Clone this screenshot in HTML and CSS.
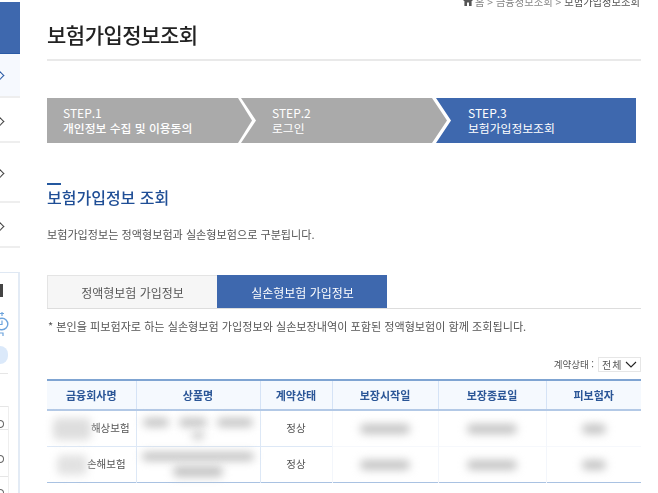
FILE: index.html
```html
<!DOCTYPE html>
<html lang="ko">

<head>
  <meta charset="UTF-8">
  <meta name="viewport" content="width=device-width, initial-scale=1.0">
  <title>보험가입정보조회</title>
  <link rel="stylesheet" href="styles.css">
</head>

<body>
  <aside class="sidebar">
    <div class="side-head"></div>
    <div class="side-item side-item-on"><span class="chevron"></span></div>
    <div class="side-item"><span class="chevron"></span></div>
    <div class="side-item side-item-tall"><span class="chevron"></span></div>
    <div class="side-item"><span class="chevron"></span></div>

    <div class="side-box">
      <div class="side-box-title"></div>
      <svg class="side-icon" width="10" height="24" viewBox="0 0 10 24">
        <path d="M2 0v4M0 1.500h4M0 21h3v3" fill="none" stroke="#6ea4dc" stroke-width="1.200"/>
        <circle cx="2" cy="12" r="5.800" fill="none" stroke="#6ea4dc" stroke-width="1.400"/>
        <path d="M2 8.500v4h-3" fill="none" stroke="#6ea4dc" stroke-width="1.200"/>
      </svg>
      <div class="side-pill"></div>
      <div class="side-line"></div>
      <div class="side-rows">
        <div class="side-row side-row-a"><span class="dot"></span></div>
        <div class="side-row side-row-b"><span class="dot"></span></div>
        <div class="side-row side-row-c"><span class="dot"></span></div>
      </div>
    </div>
  </aside>

  <main class="content">
    <div class="crumb">
      <svg width="10" height="10" viewBox="0 0 10 10">
        <path d="M5 0 10 5H8.600V10H6V6.500H4V10H1.400V5H0Z" fill="#555"/>
      </svg>
      <span>홈 &gt; 금융정보조회 &gt; <b>보험가입정보조회</b></span>
    </div>

    <h1 class="page-title">보험가입정보조회</h1>

    <ol class="steps">
      <li class="step step-first">
        <span>STEP.1</span>
        <strong>개인정보 수집 및 이용동의</strong>
      </li>
      <li class="step step-mid">
        <span>STEP.2</span>
        로그인
      </li>
      <li class="step step-last">
        <span>STEP.3</span>
        보험가입정보조회
      </li>
    </ol>

    <h2 class="section-title">보험가입정보 조회</h2>
    <p class="lead">보험가입정보는 정액형보험과 실손형보험으로 구분됩니다.</p>

    <div class="tabs">
      <a class="tab">정액형보험 가입정보</a>
      <a class="tab tab-on">실손형보험 가입정보</a>
    </div>
    <p class="note">* 본인을 피보험자로 하는 실손형보험 가입정보와 실손보장내역이 포함된 정액형보험이 함께 조회됩니다.</p>

    <div class="filter">
      <span>계약상태 :</span>
      <div class="fake-select">
        전체
        <svg width="12" height="7" viewBox="0 0 12 7"><path d="M1 1l5 5 5-5" fill="none" stroke="#222" stroke-width="1.100"/></svg>
      </div>
    </div>

    <table class="result">
      <colgroup>
        <col class="c1"><col class="c2"><col class="c3"><col class="c4"><col class="c5"><col class="c6">
      </colgroup>
      <thead>
        <tr>
          <th>금융회사명</th>
          <th>상품명</th>
          <th>계약상태</th>
          <th>보장시작일</th>
          <th>보장종료일</th>
          <th>피보험자</th>
        </tr>
      </thead>
      <tbody>
        <tr>
          <td class="company"><div class="cell-row"><i class="smudge s-name"></i>해상보험</div></td>
          <td>
            <div class="cell-stack">
              <div class="cell-row"><i class="smudge s-p1"></i><i class="smudge s-p2"></i><i class="smudge s-p3"></i></div>
              <i class="smudge s-p4"></i>
            </div>
          </td>
          <td>정상</td>
          <td class="hidden-cell"><i class="smudge s-date"></i></td>
          <td class="hidden-cell"><i class="smudge s-date"></i></td>
          <td class="hidden-cell"><i class="smudge s-person"></i></td>
        </tr>
        <tr>
          <td class="company"><div class="cell-row"><i class="smudge s-name2"></i>손해보험</div></td>
          <td>
            <div class="cell-stack">
              <i class="smudge s-p5"></i>
              <i class="smudge s-p6"></i>
            </div>
          </td>
          <td>정상</td>
          <td class="hidden-cell"><i class="smudge s-date"></i></td>
          <td class="hidden-cell"><i class="smudge s-date"></i></td>
          <td class="hidden-cell"><i class="smudge s-person"></i></td>
        </tr>
      </tbody>
    </table>
  </main>
</body>

</html>
```

FILE: styles.css
```css
html, body {
  height: 100%;
}

body {
  margin: 0;
  display: flex;
  overflow: hidden;
  background-color: #ffffff;
  color: #555555;
  font-family: "Noto Sans CJK KR", "Noto Sans", sans-serif;
  font-size: 11px;
}

/* the screenshot is a scaled capture, so everything is a bit soft */
.sidebar,
.content {
  filter: blur(0.35px);
}

/* left menu, cut off by the window */
.sidebar {
  width: 20px;
  flex-shrink: 0;
  margin-right: 27px;
  overflow: hidden;
}

.side-head {
  height: 51px;
  margin-top: 2px;
  background-color: #3e68ae;
  border-bottom: 1px solid #2a5aa5;
}

.side-item {
  box-sizing: border-box;
  height: 45px;
  display: flex;
  align-items: center;
  border-bottom: 2px solid #eeeeee;
}

.side-item-on {
  height: 44px;
  background-color: #f6f9fe;
}

.side-item-tall {
  height: 60px;
}

.chevron {
  width: 6px;
  height: 6px;
  margin: 3px 0 0 -4px;
  border-top: 1.500px solid #444444;
  border-right: 1.500px solid #444444;
  transform: rotate(45deg);
}

.side-item-on .chevron {
  margin-top: 0;
  border-color: #2a5aa5;
}

.side-box {
  box-sizing: border-box;
  height: 230px;
  margin-top: 24px;
  padding-top: 11px;
  border-top: 1px solid #dfe8f3;
  border-right: 2px solid #e3ebf5;
}

.side-box-title {
  width: 3px;
  height: 13px;
  background-color: #444444;
}

.side-icon {
  display: block;
  margin-top: 15px;
}

.side-pill {
  width: 8px;
  height: 18px;
  margin-top: 10px;
  background-color: #dbe9fa;
  border-radius: 0 9px 9px 0;
}

.side-line {
  width: 8px;
  height: 1px;
  margin-top: 9px;
  background-color: #e6e6e6;
}

.side-rows {
  width: 8px;
  margin-top: 32px;
  border-right: 1px solid #eeeeee;
}

.side-row {
  box-sizing: border-box;
  display: flex;
  border-top: 1px solid #e6e6e6;
}

.side-row-a { height: 23px; padding-top: 13px; }
.side-row-b { height: 47px; padding-top: 25px; }
.side-row-c { height: 30px; padding-top: 12px; }

.dot {
  width: 3px;
  height: 6px;
  border: 1px solid #666666;
  border-left: 0;
  border-radius: 0 4px 4px 0;
}

/* main column */
.content {
  width: 594px;
  flex-shrink: 0;
}

.crumb {
  display: flex;
  justify-content: flex-end;
  align-items: center;
  gap: 2px;
  height: 12px;
  margin-top: -5px;
  padding-right: 1px;
  font-size: 10.300px;
  color: #888888;
}

.crumb b {
  font-weight: normal;
  color: #555555;
}

.page-title {
  margin: 13px 0 0;
  height: 41px;
  line-height: 29px;
  font-size: 21px;
  font-weight: 500;
  color: #222222;
  letter-spacing: -0.500px;
  border-bottom: 2px solid #e9e9e9;
  box-sizing: border-box;
}

.steps {
  display: flex;
  list-style: none;
  margin: 37px 0 0;
  padding: 0;
  height: 45px;
}

.step {
  box-sizing: border-box;
  height: 45px;
  padding-top: 7px;
  line-height: 15px;
  font-size: 11.800px;
  color: #ffffff;
  background-color: #aaaaaa;
}

.step span {
  display: block;
  font-size: 12px;
}

.step strong {
  font-weight: 500;
}

.step-first {
  width: 205px;
  padding-left: 16px;
  clip-path: polygon(0 0, 191px 0, 100% 50%, 191px 100%, 0 100%);
}

.step-mid {
  width: 206px;
  margin-left: -11px;
  padding-left: 31px;
  clip-path: polygon(0 0, 191px 0, 100% 50%, 191px 100%, 0 100%, 15px 50%);
}

.step-last {
  width: 200px;
  margin-left: -11px;
  padding-left: 32px;
  background-color: #3e68ae;
  clip-path: polygon(0 0, 100% 0, 100% 100%, 0 100%, 15px 50%);
}

.section-title {
  position: relative;
  margin: 43px 0 0;
  line-height: 22px;
  font-size: 16px;
  font-weight: 500;
  color: #1f4e96;
}

.section-title::before {
  content: "";
  position: absolute;
  left: 0;
  top: -3px;
  width: 14px;
  height: 2px;
  background-color: #24589f;
}

.lead {
  margin: 17px 0 0;
  line-height: 18px;
  font-size: 11.100px;
}

.tabs {
  display: flex;
  margin-top: 32px;
  border-bottom: 1px solid #dddddd;
}

.tab {
  box-sizing: border-box;
  width: 170px;
  height: 33px;
  line-height: 33px;
  text-align: center;
  font-size: 12px;
  background-color: #f6f6f6;
  border: 1px solid #e4e4e4;
  border-bottom: 0;
  border-right: 0;
}

.tab-on {
  background-color: #3e68ae;
  border-color: #3e68ae;
  color: #ffffff;
}

.note {
  margin: 8px 0 0 1px;
  line-height: 18px;
  font-size: 11.100px;
}

.filter {
  display: flex;
  justify-content: flex-end;
  align-items: center;
  gap: 4px;
  margin-top: 21px;
  height: 16px;
  font-size: 9.500px;
}

.fake-select {
  box-sizing: border-box;
  display: flex;
  align-items: center;
  justify-content: space-between;
  width: 43px;
  height: 15px;
  padding: 0 3px 0 3px;
  font-size: 10px;
  letter-spacing: 1px;
  border: 1px solid #e6e6e6;
}

.result {
  width: 594px;
  margin-top: 7px;
  border-collapse: collapse;
  table-layout: fixed;
  border-top: 2px solid #7fa4d2;
  border-bottom: 1px solid #a9c2e2;
}

.c1 { width: 89px; }
.c2 { width: 124px; }
.c3 { width: 72px; }
.c4 { width: 106px; }
.c5 { width: 108px; }
.c6 { width: 95px; }

.result th {
  height: 28px;
  padding: 0;
  font-size: 11px;
  font-weight: 700;
  color: #2b5697;
  background-color: #f5f9fe;
  border-left: 1px solid #d5e3f6;
  border-bottom: 2px solid #b3c9e6;
}

.result td {
  height: 35px;
  padding: 0;
  line-height: 1;
  font-size: 10.500px;
  text-align: center;
  border-left: 1px solid #dde8f6;
  border-top: 1px solid #dde8f6;
}

.result th:first-child,
.result td:first-child {
  border-left: 0;
}

/* row lines fade out where the capture was blurred */
.result td.hidden-cell {
  border-left-color: #f3f6fb;
  border-top-color: #f6f8fc;
}

.cell-row {
  display: flex;
  align-items: center;
  justify-content: center;
  white-space: nowrap;
}

.cell-stack {
  display: flex;
  flex-direction: column;
  align-items: center;
  gap: 5px;
}

/* names and dates are blurred out in the capture */
.smudge {
  display: inline-block;
  vertical-align: middle;
  background-color: #c4c4c4;
  border-radius: 5px;
  filter: blur(4px);
}

.s-name {
  width: 38px;
  height: 22px;
  background-color: #dedede;
}

.s-name2 {
  width: 30px;
  height: 20px;
  background-color: #e2e2e2;
}

.s-p1 { width: 26px; height: 9px; }
.s-p2 { width: 28px; height: 9px; margin: 0 10px; }
.s-p3 { width: 36px; height: 9px; }
.s-p4 { width: 12px; height: 7px; }
.s-p5 { width: 112px; height: 9px; }
.s-p6 { width: 50px; height: 11px; }

.s-date {
  width: 50px;
  height: 10px;
}

.s-person {
  width: 24px;
  height: 10px;
}
```
